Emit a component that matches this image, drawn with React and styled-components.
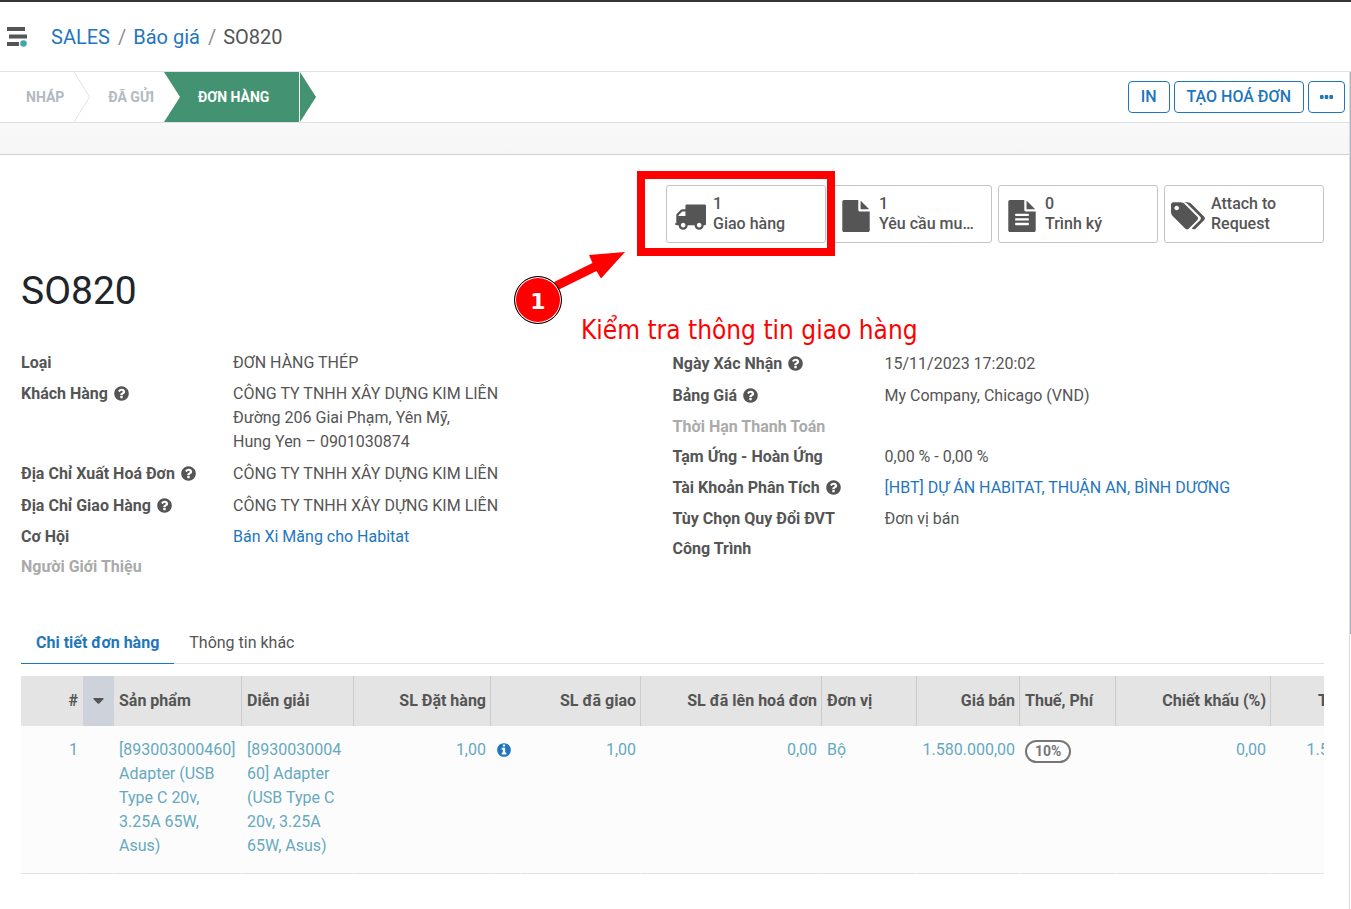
import React from "react";
import styled, { createGlobalStyle, css } from "styled-components";

const GlobalStyle = createGlobalStyle`
  *, *::before, *::after { box-sizing: border-box; }
  body {
    margin: 0;
    background: #fff;
    color: #555;
    font: 400 16px/24px Roboto, "Noto Sans", sans-serif;
  }
  a { color: #1f76bd; text-decoration: none; }
  button { font-family: inherit; cursor: pointer; }
`;

/* ---------- icons ---------- */

const DISC =
  "m384 192q0 209-103 385.5t-279.5 279.5-385.5 103-385.5-103-279.5-279.5-103-385.5 103-385.5 279.5-279.5 385.5-103 385.5 103 279.5 279.5 103 385.5z";

const PATHS = {
  truck:
    "M640 1408q0-52-38-90t-90-38-90 38-38 90 38 90 90 38 90-38 38-90zm-384-512h384v-256h-158q-13 0-22 9l-195 195q-9 9-9 22v30zm1280 512q0-52-38-90t-90-38-90 38-38 90 38 90 90 38 90-38 38-90zm256-1088v1024q0 15-4 26.5t-13.5 18.5-16.5 11.5-23.5 6-22.5 2-25.5 0-22.5-.5q0 106-75 181t-181 75-181-75-75-181h-384q0 106-75 181t-181 75-181-75-75-181h-64q-3 0-22.5.5t-25.5 0-22.5-2-23.5-6-16.5-11.5-13.5-18.5-4-26.5q0-26 19-45t45-19v-320q0-8-.5-35t0-38 2.5-34.5 6.5-37 14-30.5 22.5-30l198-198q19-19 50.5-32t58.5-13h160v-192q0-26 19-45t45-19h1024q26 0 45 19t19 45z",
  file:
    "M1152 512v-472q22 14 36 28l408 408q14 14 28 36h-472zm-128 32q0 40 28 68t68 28h544v1056q0 40-28 68t-68 28h-1344q-40 0-68-28t-28-68v-1600q0-40 28-68t68-28h800v544z",
  fileText:
    "M1596 476q14 14 28 36h-472v-472q22 14 36 28zm-476 164h544v1056q0 40-28 68t-68 28h-1344q-40 0-68-28t-28-68v-1600q0-40 28-68t68-28h800v544q0 40 28 68t68 28zm160 736v-64q0-14-9-23t-23-9h-704q-14 0-23 9t-9 23v64q0 14 9 23t23 9h704q14 0 23-9t9-23zm0-256v-64q0-14-9-23t-23-9h-704q-14 0-23 9t-9 23v64q0 14 9 23t23 9h704q14 0 23-9t9-23zm0-256v-64q0-14-9-23t-23-9h-704q-14 0-23 9t-9 23v64q0 14 9 23t23 9h704q14 0 23-9t9-23z",
  tags:
    "M576 448q0-53-37.5-90.5t-90.5-37.5-90.5 37.5-37.5 90.5 37.5 90.5 90.5 37.5 90.5-37.5 37.5-90.5zm1067 576q0 53-37 90l-491 492q-39 37-91 37-53 0-90-37l-715-716q-38-37-64.5-101t-26.5-117v-416q0-52 38-90t90-38h416q53 0 117 26.5t102 64.5l715 714q37 39 37 91zm384 0q0 53-37 90l-491 492q-39 37-91 37-36 0-59-14t-53-45l470-470q37-37 37-90 0-52-37-91l-715-714q-38-38-102-64.5t-117-26.5h224q53 0 117 26.5t102 64.5l715 714q37 39 37 91z",
  question:
    "M1024 1376v-192q0-14-9-23t-23-9h-192q-14 0-23 9t-9 23v192q0 14 9 23t23 9h192q14 0 23-9t9-23zm256-672q0-88-55.5-163t-138.5-116-170-41q-243 0-371 213-15 24 8 42l132 100q7 6 19 6 16 0 25-12 53-68 86-92 34-24 86-24 48 0 85.5 26t37.5 59q0 38-20 61t-68 45q-63 28-115.5 86.5t-52.5 125.5v36q0 14 9 23t23 9h192q14 0 23-9t9-23q0-19 21.5-49.5t54.5-49.5q32-18 49-28.5t46-35 44.5-48 28-60.5 12.5-81z" +
    DISC,
  info:
    "M1152 1376v-160q0-14-9-23t-23-9h-96v-512q0-14-9-23t-23-9h-320q-14 0-23 9t-9 23v160q0 14 9 23t23 9h96v320h-96q-14 0-23 9t-9 23v160q0 14 9 23t23 9h448q14 0 23-9t9-23zm-128-896v-160q0-14-9-23t-23-9h-192q-14 0-23 9t-9 23v160q0 14 9 23t23 9h192q14 0 23-9t9-23z" +
    "m640 416q0 209-103 385.5t-279.5 279.5-385.5 103-385.5-103-279.5-279.5-103-385.5 103-385.5 279.5-279.5 385.5-103 385.5 103 279.5 279.5 103 385.5z",
};

const IconSvg = styled.svg`
  display: block;
  flex: none;
  height: ${(p) => p.$size}px;
  fill: currentColor;
`;

function Icon({ name, size, box = "0 0 1792 1792" }) {
  return (
    <IconSvg viewBox={box} $size={size} aria-hidden="true">
      <path d={PATHS[name]} />
    </IconSvg>
  );
}

/* ---------- top bar ---------- */

const Page = styled.div`
  position: relative;
  min-height: 100vh;
  overflow: hidden;
`;

const TopBar = styled.header`
  display: flex;
  align-items: center;
  gap: 23px;
  height: 72px;
  padding: 0 6px;
  border-top: 2px solid #383434;
  border-bottom: 1px solid #dee2e6;
`;

const MenuButton = styled.button`
  display: flex;
  padding: 0;
  border: 0;
  background: none;
`;

const Breadcrumb = styled.ol`
  display: flex;
  margin: 0;
  padding: 0;
  list-style: none;
  font-size: 20px;
  li + li::before {
    content: "/";
    padding: 0 7px 0 8px;
    color: #8b8f93;
  }
`;

/* ---------- status bar ---------- */

const StatusBar = styled.div`
  display: flex;
  justify-content: space-between;
  align-items: center;
  height: 51px;
  padding-right: 6px;
  border-bottom: 1px solid #dee2e6;
`;

const Steps = styled.div`
  display: flex;
  height: 50px;
`;

const Step = styled.button`
  position: relative;
  height: 50px;
  padding: 0 10px 0 ${(p) => (p.$first ? 26 : 34)}px;
  border: 0;
  background: #fff;
  color: #b1b9c2;
  font-size: 14px;
  font-weight: 700;
  ${(p) =>
    p.$active &&
    css`
      padding-right: 30px;
      background: #439372;
      color: #fff;
    `}
`;

const Chevron = styled.svg`
  position: absolute;
  z-index: 1;
  top: 0;
  left: 100%;
  width: 17px;
  height: 50px;
`;

const Actions = styled.div`
  display: flex;
  gap: 4px;
`;

const ActionButton = styled.button`
  display: flex;
  align-items: center;
  height: 32px;
  padding: 0 ${(p) => (p.$icon ? 11 : 12)}px 1px;
  border: 1px solid #1f76bd;
  border-radius: 4px;
  background: #fff;
  color: #1f76bd;
  font-size: 16px;
  font-weight: 500;
`;

/* ---------- sheet ---------- */

const Backdrop = styled.div`
  padding-top: 31px;
  background: linear-gradient(#f9f9f9, #f6f6f6 31px, #fff 31px);
`;

const Sheet = styled.main`
  display: flow-root;
  padding: 30px 27px 35px 21px;
  border-top: 1px solid #cfd2da;
  background: #fff;
`;

const ScrollThumb = styled.div`
  position: absolute;
  top: 72px;
  right: 0;
  bottom: 0;
  width: 2px;
  background: linear-gradient(#adb5bd, #adb5bd) 1px 0 / 1px 562px no-repeat,
    linear-gradient(#d9dce0, #d9dce0) 0 0 / 1px 100% no-repeat;
`;

const StatButtons = styled.div`
  position: relative;
  display: flex;
  gap: 6px;
  width: max-content;
  margin-left: auto;
`;

const StatButton = styled.button`
  display: flex;
  align-items: center;
  gap: 7px;
  width: 160px;
  height: 58px;
  padding: 0 7px;
  border: 1px solid #c4c4c4;
  border-radius: 3px;
  background: #fff;
  color: #555;
  font-size: 16px;
  font-weight: 500;
  line-height: 20px;
  text-align: left;
`;

const StatIcon = styled.span`
  display: flex;
  justify-content: center;
  flex: none;
  width: 32px;
  padding-top: 4px;
`;

const StatText = styled.span`
  width: 98px;
  overflow: hidden;
  text-overflow: ellipsis;
  white-space: ${(p) => (p.$wrap ? "normal" : "nowrap")};
`;

const StatValue = styled.span`
  display: block;
`;

const Title = styled.h1`
  margin: 24px 0 33px;
  color: #212529;
  font-size: 39px;
  font-weight: 400;
  line-height: 48px;
`;

/* ---------- callout over the delivery button ---------- */

const Frame = styled.div`
  position: absolute;
  z-index: 2;
  top: -14px;
  left: -29px;
  width: 198px;
  height: 85px;
  border: 8px solid #f00;
  pointer-events: none;
`;

const Arrow = styled.svg`
  position: absolute;
  top: 64px;
  left: -112px;
  width: 72px;
  height: 44px;
`;

const Marker = styled.div`
  position: absolute;
  top: 91px;
  left: -152px;
  width: 48px;
  height: 48px;
  border: 1px solid #000;
  border-radius: 50%;
  background: #f00;
  box-shadow: inset 0 0 0 1px #fff;
  color: #fff;
  font: 700 22px/50px "DejaVu Sans", sans-serif;
  text-align: center;
`;

const Caption = styled.p`
  position: absolute;
  top: 129px;
  left: -85px;
  margin: 0;
  color: #f00;
  font: 400 26px/32px "DejaVu Sans Condensed", "DejaVu Sans", sans-serif;
  white-space: nowrap;
`;

/* ---------- fields ---------- */

const FieldGroups = styled.div`
  display: grid;
  grid-template-columns: 1fr 1fr;
  align-items: start;
`;

const Fields = styled.dl`
  margin: 0;
`;

const Field = styled.div`
  display: grid;
  grid-template-columns: 212px 1fr;
  padding: ${(p) => (p.$help ? 4 : 3)}px 0;
`;

const Label = styled.dt`
  display: flex;
  align-items: center;
  gap: 5px;
  height: 24px;
  color: ${(p) => (p.$empty ? "#aaa" : "#555")};
  font-weight: 700;
  ${IconSvg} {
    margin-bottom: 2px;
  }
`;

const Value = styled.dd`
  margin: 0;
  white-space: pre-line;
`;

/* ---------- notebook ---------- */

const Tabs = styled.div`
  display: flex;
  margin: 41px 0 12px;
  border-bottom: 1px solid #dee2e6;
`;

const Tab = styled.button`
  margin-bottom: -1px;
  padding: 8px 15px;
  border: 0;
  border-bottom: 1px solid ${(p) => (p.$active ? "#1f76bd" : "transparent")};
  background: none;
  color: ${(p) => (p.$active ? "#1f76bd" : "#555")};
  font-size: 16px;
  font-weight: ${(p) => (p.$active ? 700 : 400)};
  line-height: 24px;
`;

const TableWrap = styled.div`
  overflow: hidden;
`;

const Table = styled.table`
  table-layout: fixed;
  width: 1383px;
  border-spacing: 0;
`;

const Col = styled.col`
  width: ${(p) => p.$w}px;
`;

const Th = styled.th`
  height: 50px;
  padding: 0 4px 0 5px;
  border-right: 1px solid ${(p) => (p.$plain ? "transparent" : "#ccc")};
  background: ${(p) => (p.$sort ? "#ced2db" : "#e4e4e4")};
  font-weight: 700;
  text-align: ${(p) => (p.$num ? "right" : "left")};
  white-space: nowrap;
`;

const SortButton = styled.button`
  display: flex;
  justify-content: center;
  width: 100%;
  padding: 0;
  border: 0;
  background: none;
`;

const Td = styled.td`
  height: 148px;
  padding: 12px 4px 0 5px;
  border-right: 1px solid transparent;
  border-bottom: 1px solid #dee2e6;
  background: #fcfcfc;
  color: #66a9bf;
  text-align: ${(p) => (p.$num ? "right" : "left")};
  vertical-align: top;
  overflow-wrap: anywhere;
`;

const InfoButton = styled.button`
  display: flex;
  align-items: center;
  height: 24px;
  padding: 0;
  border: 0;
  background: none;
  color: #1f76bd;
`;

const Tag = styled.span`
  display: inline-block;
  margin-top: 2px;
  padding: 0 8px;
  border: 2px solid #777;
  border-radius: 12px;
  background: #fff;
  color: #777;
  font-size: 14px;
  font-weight: 700;
  line-height: 19px;
`;

const COMPANY = "CÔNG TY TNHH XÂY DỰNG KIM LIÊN";

const LEFT = [
  { label: "Loại", value: "ĐƠN HÀNG THÉP" },
  {
    label: "Khách Hàng",
    help: true,
    value: `${COMPANY}\nĐường 206 Giai Phạm, Yên Mỹ,\nHung Yen – 0901030874`,
  },
  { label: "Địa Chỉ Xuất Hoá Đơn", help: true, value: COMPANY },
  { label: "Địa Chỉ Giao Hàng", help: true, value: COMPANY },
  { label: "Cơ Hội", value: "Bán Xi Măng cho Habitat", link: true },
  { label: "Người Giới Thiệu", empty: true },
];

const RIGHT = [
  { label: "Ngày Xác Nhận", help: true, value: "15/11/2023 17:20:02" },
  { label: "Bảng Giá", help: true, value: "My Company, Chicago (VND)" },
  { label: "Thời Hạn Thanh Toán", empty: true },
  { label: "Tạm Ứng - Hoàn Ứng", value: "0,00 % - 0,00 %" },
  {
    label: "Tài Khoản Phân Tích",
    help: true,
    value: "[HBT] DỰ ÁN HABITAT, THUẬN AN, BÌNH DƯƠNG",
    link: true,
  },
  { label: "Tùy Chọn Quy Đổi ĐVT", value: "Đơn vị bán" },
  { label: "Công Trình" },
];

function FieldList({ items }) {
  return (
    <Fields>
      {items.map((f) => (
        <Field key={f.label} $help={f.help}>
          <Label $empty={f.empty}>
            {f.label}
            {f.help && <Icon name="question" size={17} />}
          </Label>
          <Value>{f.link ? <a href="#record">{f.value}</a> : f.value}</Value>
        </Field>
      ))}
    </Fields>
  );
}

const STATS = [
  { icon: "truck", value: "1", label: "Giao hàng" },
  { icon: "file", value: "1", label: "Yêu cầu mua hàng" },
  { icon: "fileText", value: "0", label: "Trình ký" },
  { icon: "tags", label: "Attach to Request", box: "128 0 1920 1792" },
];

const COLUMNS = [62, 31, 128, 112, 137, 30, 120, 181, 95, 103, 96, 155, 133];

export default function App() {
  return (
    <Page>
      <GlobalStyle />
      <TopBar>
        <MenuButton aria-label="Menu">
          <svg width="22" height="20" viewBox="0 0 22 20">
            <g fill="#555">
              <path d="M1 0h18v4H1zM3 7.500h18v4H3zM1 15h12v4H1z" />
            </g>
            <circle cx="17.500" cy="16.500" r="3.300" fill="#40a8ad" />
          </svg>
        </MenuButton>
        <nav>
          <Breadcrumb>
            <li><a href="#sales">SALES</a></li>
            <li><a href="#quotations">Báo giá</a></li>
            <li>SO820</li>
          </Breadcrumb>
        </nav>
      </TopBar>

      <StatusBar>
        <Steps>
          <Step $first>
            NHÁP
            <Chevron viewBox="0 0 17 50">
              <path d="M0 0L15.500 25L0 50" fill="#fff" stroke="#dee2e6" />
            </Chevron>
          </Step>
          <Step>
            ĐÃ GỬI
            <Chevron viewBox="0 0 17 50">
              <path d="M0 0L16 25L0 50" fill="#fff" />
            </Chevron>
          </Step>
          <Step $active>
            ĐƠN HÀNG
            <Chevron viewBox="0 0 17 50">
              <path d="M1 0L17 25L1 50" fill="#439372" />
            </Chevron>
          </Step>
        </Steps>
        <Actions>
          <ActionButton>IN</ActionButton>
          <ActionButton>TẠO HOÁ ĐƠN</ActionButton>
          <ActionButton $icon aria-label="Thêm">
            <svg width="13" height="4" viewBox="0 0 13 4" fill="currentColor">
              <rect width="3.600" height="4" rx="1" />
              <rect x="4.700" width="3.600" height="4" rx="1" />
              <rect x="9.400" width="3.600" height="4" rx="1" />
            </svg>
          </ActionButton>
        </Actions>
      </StatusBar>

      <Backdrop>
        <Sheet>
          <StatButtons>
            {STATS.map((s) => (
              <StatButton key={s.icon}>
                <StatIcon><Icon name={s.icon} size={32} box={s.box} /></StatIcon>
                <StatText $wrap={!s.value}>
                  {s.value && <StatValue>{s.value}</StatValue>}
                  {s.label}
                </StatText>
              </StatButton>
            ))}
            <Frame />
            <Arrow viewBox="0 0 72 44" fill="#f00">
              <path d="M71 3L35 6L38.500 14L0 33L4 41L42.500 22L47 29.500Z" />
            </Arrow>
            <Marker>1</Marker>
            <Caption>Kiểm tra thông tin giao hàng</Caption>
          </StatButtons>

          <Title>SO820</Title>

          <FieldGroups>
            <FieldList items={LEFT} />
            <FieldList items={RIGHT} />
          </FieldGroups>

          <Tabs role="tablist">
            <Tab role="tab" aria-selected="true" $active>Chi tiết đơn hàng</Tab>
            <Tab role="tab" aria-selected="false">Thông tin khác</Tab>
          </Tabs>

          <TableWrap>
            <Table>
              <colgroup>
                {COLUMNS.map((w, i) => <Col key={i} $w={w} />)}
              </colgroup>
              <thead>
                <tr>
                  <Th $num $plain>#</Th>
                  <Th $sort $plain>
                    <SortButton aria-label="Sắp xếp">
                      <svg width="11" height="6" viewBox="0 0 11 6">
                        <path d="M1 0h9q1 0.500 .4 1.300L6.300 5.500q-.8.700-1.600 0L.6 1.300Q0 .5 1 0z" fill="#555" />
                      </svg>
                    </SortButton>
                  </Th>
                  <Th>Sản phẩm</Th>
                  <Th>Diễn giải</Th>
                  <Th $num>SL Đặt hàng</Th>
                  <Th $num colSpan={2}>SL đã giao</Th>
                  <Th $num>SL đã lên hoá đơn</Th>
                  <Th>Đơn vị</Th>
                  <Th $num>Giá bán</Th>
                  <Th>Thuế, Phí</Th>
                  <Th $num>Chiết khấu (%)</Th>
                  <Th $num>Tổng giá trị</Th>
                </tr>
              </thead>
              <tbody>
                <tr>
                  <Td $num>1</Td>
                  <Td />
                  <Td>[893003000460] Adapter (USB Type C 20v, 3.25A 65W, Asus)</Td>
                  <Td>[893003000460] Adapter (USB Type C 20v, 3.25A 65W, Asus)</Td>
                  <Td $num>1,00</Td>
                  <Td>
                    <InfoButton aria-label="Tồn kho"><Icon name="info" size={16} /></InfoButton>
                  </Td>
                  <Td $num>1,00</Td>
                  <Td $num>0,00</Td>
                  <Td>Bộ</Td>
                  <Td $num>1.580.000,00</Td>
                  <Td><Tag>10%</Tag></Td>
                  <Td $num>0,00</Td>
                  <Td $num>1.580.000,00</Td>
                </tr>
              </tbody>
            </Table>
          </TableWrap>
        </Sheet>
      </Backdrop>
      <ScrollThumb />
    </Page>
  );
}
